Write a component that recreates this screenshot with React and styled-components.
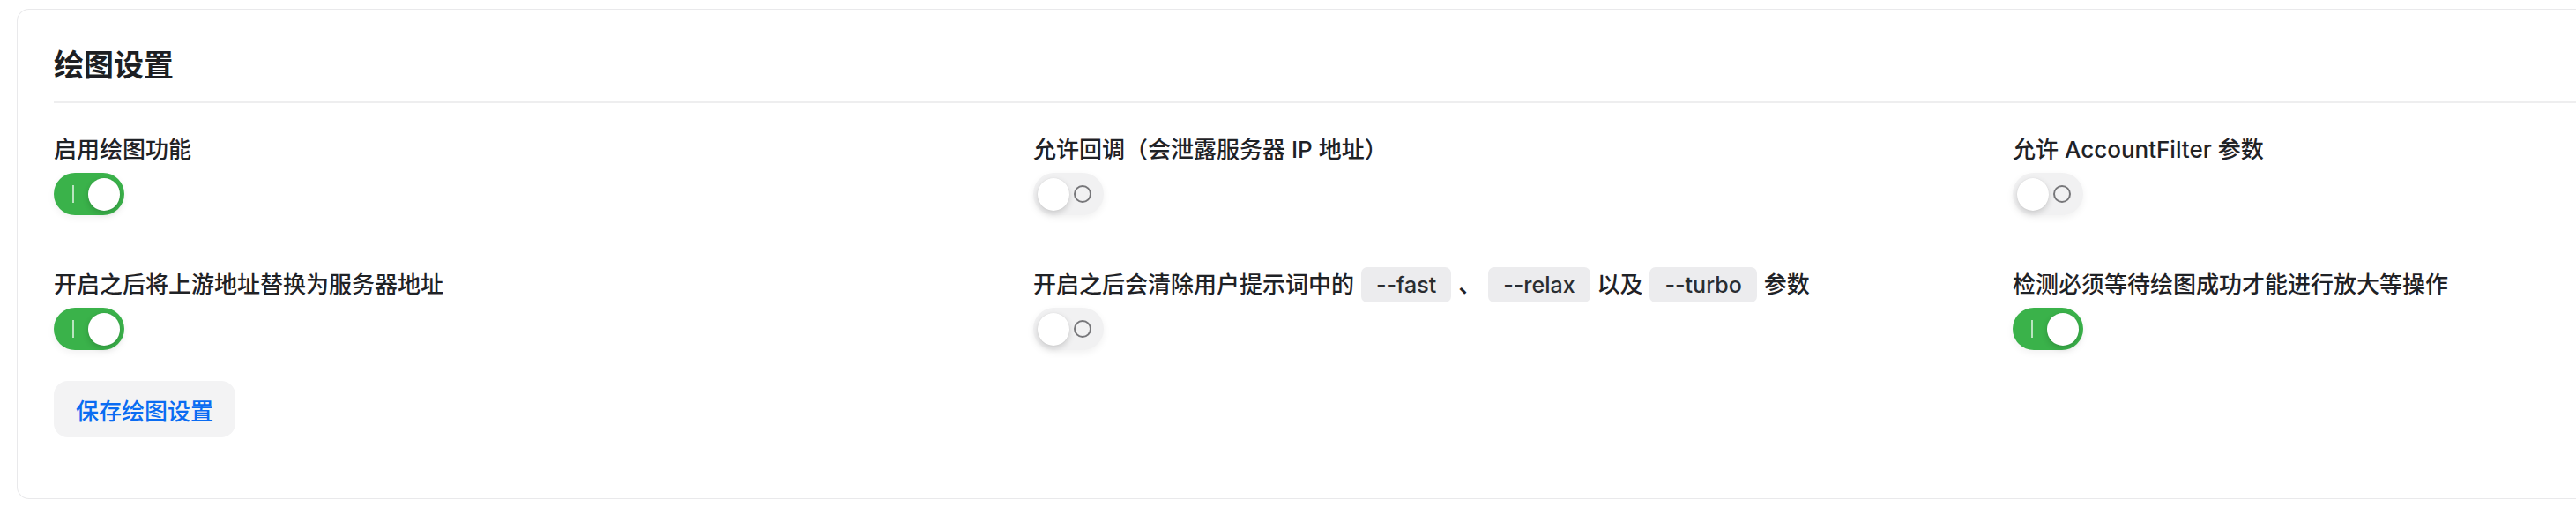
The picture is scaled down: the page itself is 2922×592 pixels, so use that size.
import React, { useState } from "react";
import styled, { createGlobalStyle } from "styled-components";

const Global = createGlobalStyle`
  html, body {
    margin: 0;
    padding: 0;
    background: #ffffff;
    overflow: hidden;
  }
  body {
    font-family: Inter, "Noto Sans CJK SC", "Noto Sans", sans-serif;
    color: #1f2226;
    -webkit-font-smoothing: antialiased;
  }
`;

const Page = styled.div`
  padding: 10px 0 0 19px;
`;

const Card = styled.section`
  background: #fff;
  border: 1px solid #e9e9eb;
  border-right: none;
  border-radius: 14px 0 0 14px;
  padding: 39px 0 69px 41px;
  box-sizing: border-box;
`;

const Header = styled.div`
  padding-bottom: 17px;
  border-bottom: 2px solid #eeeeef;
  margin-bottom: 35px;
`;

const Title = styled.h2`
  margin: 0;
  font-size: 34px;
  line-height: 48px;
  font-weight: 600;
  color: #1d1f23;
`;

const Grid = styled.div`
  display: grid;
  grid-template-columns: 1087px 1087px 1fr;
  column-gap: 24px;
  row-gap: 61px;
`;

const Field = styled.div`
  display: flex;
  flex-direction: column;
  align-items: flex-start;
  gap: 8px;
  min-width: 0;
`;

const Label = styled.div`
  font-size: 26px;
  line-height: 36px;
  font-weight: 500;
  color: #1f2226;
  white-space: nowrap;
`;

const Code = styled.code`
  font-family: Inter, "Noto Sans", sans-serif;
  font-size: 25px;
  font-weight: 500;
  color: #2a2d31;
  background: #ececee;
  border-radius: 7px;
  padding: 5px 17px;
  margin: 0 1px;
`;

const Track = styled.button`
  width: 80px;
  height: 48px;
  border: none;
  border-radius: 24px;
  padding: 0 5px;
  box-sizing: border-box;
  display: flex;
  align-items: center;
  justify-content: space-between;
  flex-direction: ${(p) => (p.$on ? "row" : "row-reverse")};
  background: ${(p) => (p.$on ? "#3ab24a" : "#f1f1f2")};
  box-shadow: 0 3px 8px rgba(0, 0, 0, 0.06);
  cursor: pointer;
`;

const Mark = styled.span`
  width: 34px;
  display: flex;
  justify-content: center;
  align-items: center;
  padding-right: ${(p) => (p.$on ? "0" : "4px")};
  box-sizing: border-box;
`;

const OnBar = styled.span`
  width: 2px;
  height: 20px;
  background: rgba(255, 255, 255, 0.65);
`;

const OffRing = styled.span`
  width: 16px;
  height: 16px;
  border-radius: 50%;
  border: 2px solid #77777a;
`;

const Knob = styled.span`
  width: 37px;
  height: 37px;
  border-radius: 50%;
  background: #ffffff;
  box-shadow: 0 3px 7px rgba(0, 0, 0, 0.16), 0 0 1px rgba(0, 0, 0, 0.12);
`;

const SaveButton = styled.button`
  margin-top: 35px;
  height: 64px;
  padding: 0 25px;
  border: none;
  border-radius: 16px;
  background: #f3f3f4;
  color: #0a6cf2;
  font-family: Inter, "Noto Sans CJK SC", sans-serif;
  font-size: 26px;
  font-weight: 500;
  cursor: pointer;
`;

function Toggle({ on, onChange }) {
  return (
    <Track $on={on} onClick={onChange} aria-pressed={on}>
      <Mark $on={on}>{on ? <OnBar /> : <OffRing />}</Mark>
      <Knob />
    </Track>
  );
}

const initial = [
  { key: "enable", label: "启用绘图功能", on: true },
  { key: "callback", label: "允许回调（会泄露服务器 IP 地址）", on: false },
  { key: "account", label: "允许 AccountFilter 参数", on: false },
  { key: "replace", label: "开启之后将上游地址替换为服务器地址", on: true },
  {
    key: "clean",
    label: (
      <>
        开启之后会清除用户提示词中的 <Code>--fast</Code> 、 <Code>--relax</Code> 以及{" "}
        <Code>--turbo</Code> 参数
      </>
    ),
    on: false,
  },
  { key: "wait", label: "检测必须等待绘图成功才能进行放大等操作", on: true },
];

export default function App() {
  const [items, setItems] = useState(initial);
  const flip = (k) =>
    setItems((list) => list.map((it) => (it.key === k ? { ...it, on: !it.on } : it)));

  return (
    <Page>
      <Global />
      <Card>
        <Header>
          <Title>绘图设置</Title>
        </Header>
        <Grid>
          {items.map((it) => (
            <Field key={it.key}>
              <Label>{it.label}</Label>
              <Toggle on={it.on} onChange={() => flip(it.key)} />
            </Field>
          ))}
        </Grid>
        <SaveButton>保存绘图设置</SaveButton>
      </Card>
    </Page>
  );
}
